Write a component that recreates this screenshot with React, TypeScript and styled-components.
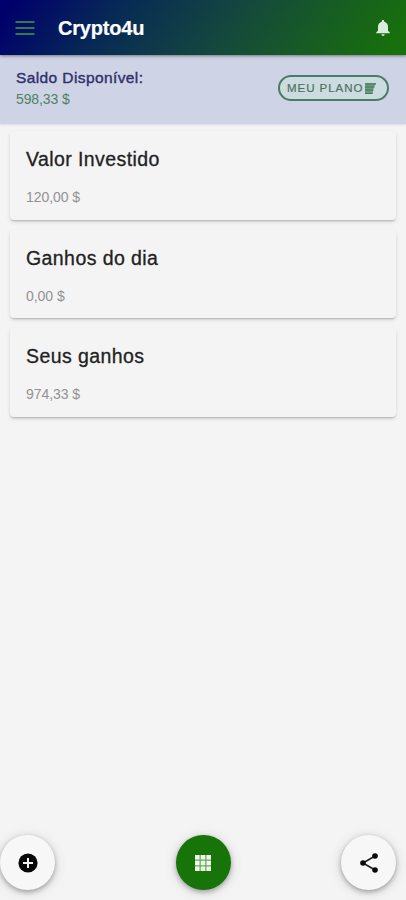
import React from "react";
import styled, { createGlobalStyle } from "styled-components";

const GlobalStyle = createGlobalStyle`
  * { box-sizing: border-box; }
  body {
    margin: 0;
    background: #f4f4f4;
    font-family: "Liberation Sans", Arial, sans-serif;
  }
`;

const Screen = styled.div`
  width: 100%;
  height: 900px;
  display: flex;
  flex-direction: column;
  background: #f4f4f4;
  overflow: hidden;
`;

const Header = styled.header`
  height: 55px;
  flex: none;
  display: flex;
  align-items: center;
  padding: 1px 15px 0 15px;
  background: linear-gradient(125deg, #00006c 3%, #072a55 28%, #14463f 54%, #175a27 74%, #17700b 96%);
  box-shadow: 0 1px 3px rgba(0, 0, 0, 0.45);
  z-index: 1;
`;

const IconButton = styled.button`
  display: flex;
  padding: 0;
  border: 0;
  background: none;
`;

const Title = styled.h1`
  flex: 1;
  margin: 0 0 0 23px;
  color: #fff;
  font-size: 20px;
  line-height: 24px;
  letter-spacing: -0.2px;
  -webkit-text-stroke: 0.2px currentColor;
`;

const BalanceBar = styled.section`
  height: 69px;
  flex: none;
  display: flex;
  align-items: flex-start;
  justify-content: space-between;
  padding: 13px 17px 0 16px;
  background: #ced3e5;
  box-shadow: 0 1px 2px rgba(0, 0, 0, 0.1);
`;

const BalanceLabel = styled.div`
  color: #30316c;
  font-size: 15.5px;
  line-height: 20px;
  letter-spacing: 0.4px;
  -webkit-text-stroke: 0.4px currentColor;
`;

const BalanceValue = styled.div`
  padding-top: 1px;
  color: #4e8163;
  font-size: 14px;
  line-height: 20px;
  letter-spacing: -0.1px;
`;

const PlanButton = styled.button`
  width: 111px;
  height: 26px;
  margin-top: 7px;
  display: flex;
  align-items: center;
  gap: 1px;
  padding: 0 0 0 7px;
  border: 2px solid #4b7c63;
  border-radius: 13px;
  background: #cbdbdf;
  color: #4d7262;
  font: 500 11.5px "Liberation Sans", Arial, sans-serif;
  letter-spacing: 0.95px;
  white-space: nowrap;
  -webkit-text-stroke: 0.2px currentColor;
`;

const Cards = styled.main`
  flex: 1;
  display: flex;
  flex-direction: column;
  gap: 10px;
  padding: 7px 10px 0;
`;

const Card = styled.article`
  height: 88.5px;
  padding: 16px;
  border-radius: 4px;
  background: #f4f4f4;
  box-shadow: 0 2px 2px -1px rgba(0, 0, 0, 0.2), 0 2px 4px rgba(0, 0, 0, 0.11);
`;

const CardTitle = styled.h2`
  margin: 0;
  color: #222;
  font-size: 19.5px;
  font-weight: 400;
  line-height: 24px;
  letter-spacing: 0.42px;
  -webkit-text-stroke: 0.3px currentColor;
`;

const CardValue = styled.p`
  margin: 16px 0 0;
  color: #929292;
  font-size: 14px;
  line-height: 20px;
  letter-spacing: -0.05px;
`;

const Actions = styled.nav`
  height: 65px;
  flex: none;
  display: grid;
  grid-template-columns: 1fr 55px 1fr;
`;

const Fab = styled.button<{ $primary?: boolean; $end?: boolean }>`
  width: 55px;
  height: 55px;
  margin-right: ${(p) => (p.$end ? "10px" : "0")};
  justify-self: ${(p) => (p.$end ? "end" : "start")};
  display: flex;
  align-items: center;
  justify-content: center;
  padding: 0;
  border: 0;
  border-radius: 50%;
  color: ${(p) => (p.$primary ? "#edffe9" : "#080808")};
  background: ${(p) => (p.$primary ? "#167409" : "#f7f7f7")};
  box-shadow: 0 2px 5px rgba(0, 0, 0, 0.3), 0 2px 14px rgba(0, 0, 0, 0.13);
`;

const entries = [
  { title: "Valor Investido", value: "120,00 $" },
  { title: "Ganhos do dia", value: "0,00 $" },
  { title: "Seus ganhos", value: "974,33 $" },
];

const MenuIcon = () => (
  <svg width="20" height="16" viewBox="0 0 20 16" fill="#327a4c">
    <path d="M0.5 1h19v2h-19zM0.5 7h19v2h-19zM0.5 13h19v2h-19z" />
  </svg>
);

const BellIcon = () => (
  <svg width="16" height="18" viewBox="0 0 16 18" fill="#dcebdf">
    <path d="M8 1c.8 0 1.2.5 1.2 1.2v.5c2.4.6 3.8 2.5 3.8 5v4l1.8 1.8v.8H1.2v-.8L3 11.7v-4c0-2.5 1.4-4.4 3.8-5v-.5C6.8 1.500 7.2 1 8 1zM6.3 15.2h3.400a1.700 1.700 0 0 1-3.400 0z" />
  </svg>
);

const ReceiptIcon = () => (
  <svg width="13" height="13" viewBox="0 0 13 13">
    <path d="M1 1h11l-2.5 5.5L8.5 12H1z" fill="#6a9c80" />
    <path d="M1 2h11M1 5h9.5M1 8h8.5M1 11.5h7.5" stroke="#47775b" />
  </svg>
);

const AddIcon = () => (
  <svg width="20" height="20" viewBox="0 0 20 20">
    <circle cx="10" cy="10" r="9.6" fill="#080808" />
    <path d="M10 5v10M5 10h10" stroke="#f4f4f4" strokeWidth="2" />
  </svg>
);

const GridIcon = () => (
  <svg width="16" height="16" viewBox="0 0 16 16" fill="currentColor">
    <path d="M0 0h16v16H0z" fill="#68a35e" />
    {[0, 5.75, 11.5].map((y) =>
      [0, 5.75, 11.5].map((x) => (
        <rect key={`${x}-${y}`} x={x} y={y} width="4.5" height="4.5" />
      ))
    )}
  </svg>
);

const ShareIcon = () => (
  <svg width="18" height="20" viewBox="0 0 18 20" fill="#080808">
    <path d="M15 3L3 10l12 7" fill="none" stroke="#222" strokeWidth="1.7" />
    <circle cx="15" cy="3" r="2.8" />
    <circle cx="3" cy="10" r="2.8" />
    <circle cx="15" cy="17" r="2.8" />
  </svg>
);

export default function App() {
  return (
    <>
      <GlobalStyle />
      <Screen>
        <Header>
          <IconButton aria-label="Menu"><MenuIcon /></IconButton>
          <Title>Crypto4u</Title>
          <IconButton aria-label="Notificações"><BellIcon /></IconButton>
        </Header>
        <BalanceBar>
          <div>
            <BalanceLabel>Saldo Disponível:</BalanceLabel>
            <BalanceValue>598,33 $</BalanceValue>
          </div>
          <PlanButton>MEU PLANO<ReceiptIcon /></PlanButton>
        </BalanceBar>
        <Cards>
          {entries.map(({ title, value }) => (
            <Card key={title}>
              <CardTitle>{title}</CardTitle>
              <CardValue>{value}</CardValue>
            </Card>
          ))}
        </Cards>
        <Actions>
          <Fab aria-label="Adicionar"><AddIcon /></Fab>
          <Fab $primary aria-label="Aplicativos"><GridIcon /></Fab>
          <Fab $end aria-label="Compartilhar"><ShareIcon /></Fab>
        </Actions>
      </Screen>
    </>
  );
}
